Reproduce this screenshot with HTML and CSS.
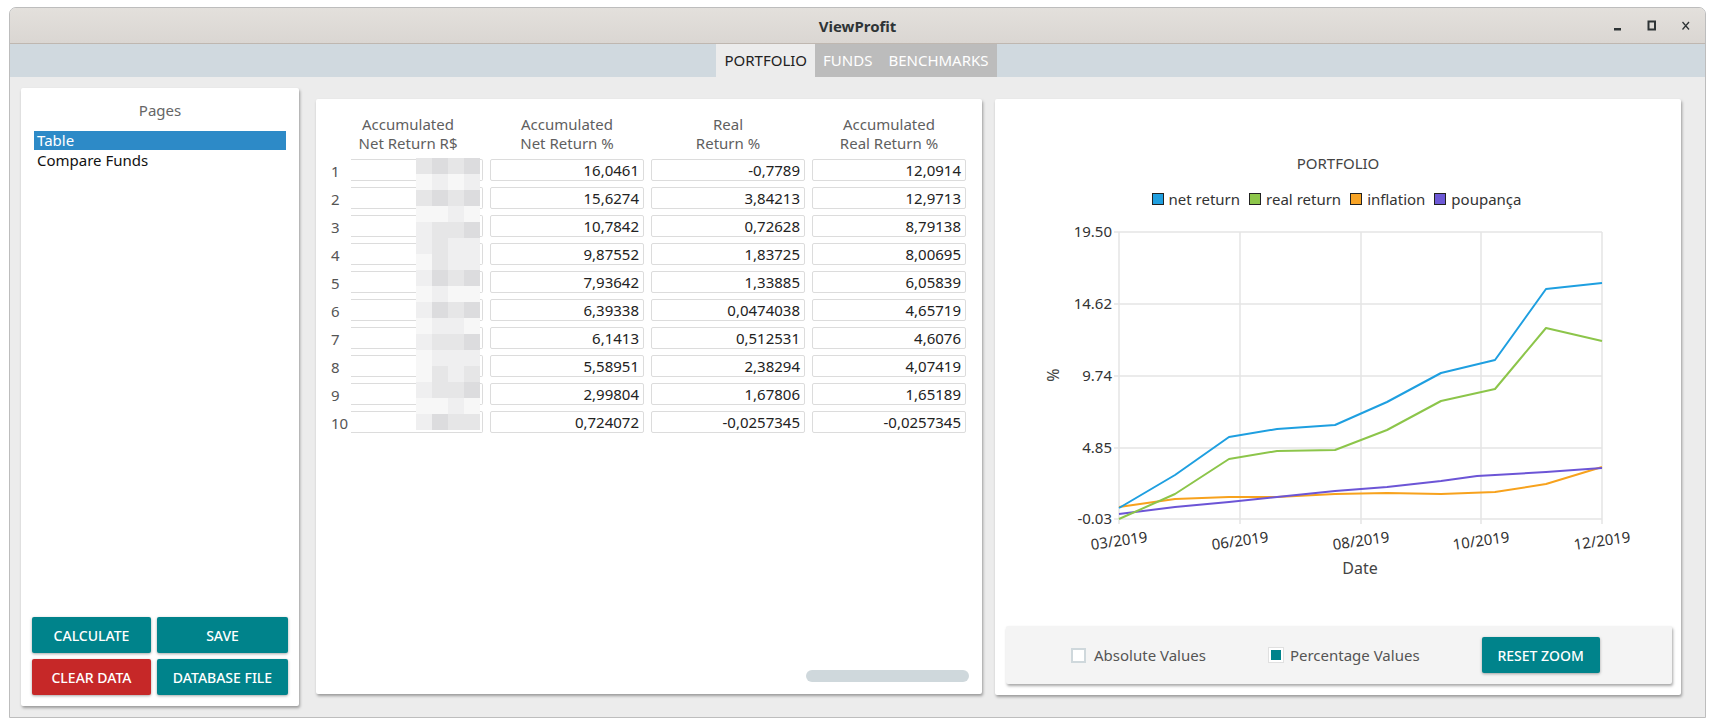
FILE: index.html
```html
<!DOCTYPE html>
<html lang="en">
<head>
<meta charset="utf-8">
<title>ViewProfit</title>
<link rel="stylesheet" href="styles.css">
</head>
<body>
<div class="window">
  <header class="titlebar">
    <div></div>
    <div class="title">ViewProfit</div>
    <div class="controls">
      <svg class="ctl" width="16" height="16" viewBox="0 0 16 16"><rect x="4" y="10" width="7" height="2.5" fill="#2e3436"/></svg>
      <svg class="ctl" width="16" height="16" viewBox="0 0 16 16"><rect x="4.5" y="3.5" width="6.5" height="8" fill="none" stroke="#2e3436" stroke-width="2"/></svg>
      <svg class="ctl" width="16" height="16" viewBox="0 0 16 16"><path d="M4.5 4 L11 11.5 M11 4 L4.5 11.5" stroke="#2e3436" stroke-width="1.3" fill="none"/></svg>
    </div>
  </header>
  <nav class="tabbar">
    <div class="tab active">PORTFOLIO</div>
    <div class="tab">FUNDS</div>
    <div class="tab">BENCHMARKS</div>
  </nav>
  <main class="content">
    <section class="panel side">
      <div class="side-title">Pages</div>
      <ul class="pagelist">
        <li class="sel">Table</li>
        <li>Compare Funds</li>
      </ul>
      <div class="spacer"></div>
      <div class="btns">
        <button class="btn teal">CALCULATE</button>
        <button class="btn teal">SAVE</button>
        <button class="btn red">CLEAR DATA</button>
        <button class="btn teal">DATABASE FILE</button>
      </div>
    </section>

    <section class="panel tablepanel">
      <div class="grid">
        <div class="hd"></div>
        <div class="hd hd1">Accumulated<br>Net Return R$</div>
        <div class="hd">Accumulated<br>Net Return %</div>
        <div class="hd">Real<br>Return %</div>
        <div class="hd">Accumulated<br>Real Return %</div>

        <div class="rn">1</div><div class="c c1"></div><div class="c">16,0461</div><div class="c">-0,7789</div><div class="c">12,0914</div>
        <div class="rn">2</div><div class="c c1"></div><div class="c">15,6274</div><div class="c">3,84213</div><div class="c">12,9713</div>
        <div class="rn">3</div><div class="c c1"></div><div class="c">10,7842</div><div class="c">0,72628</div><div class="c">8,79138</div>
        <div class="rn">4</div><div class="c c1"></div><div class="c">9,87552</div><div class="c">1,83725</div><div class="c">8,00695</div>
        <div class="rn">5</div><div class="c c1"></div><div class="c">7,93642</div><div class="c">1,33885</div><div class="c">6,05839</div>
        <div class="rn">6</div><div class="c c1"></div><div class="c">6,39338</div><div class="c">0,0474038</div><div class="c">4,65719</div>
        <div class="rn">7</div><div class="c c1"></div><div class="c">6,1413</div><div class="c">0,512531</div><div class="c">4,6076</div>
        <div class="rn">8</div><div class="c c1"></div><div class="c">5,58951</div><div class="c">2,38294</div><div class="c">4,07419</div>
        <div class="rn">9</div><div class="c c1"></div><div class="c">2,99804</div><div class="c">1,67806</div><div class="c">1,65189</div>
        <div class="rn">10</div><div class="c c1"></div><div class="c">0,724072</div><div class="c">-0,0257345</div><div class="c">-0,0257345</div>
      </div>
      <div class="mosaic">
        <i class="c3"></i><i class="d"></i><i class="c3"></i><i class="d"></i>
        <i class="a"></i><i class="b"></i><i class="a"></i><i class="b"></i>
        <i class="c3"></i><i class="d"></i><i class="c3"></i><i class="d"></i>
        <i class="a"></i><i class="a"></i><i class="b"></i><i class="a"></i>
        <i class="b"></i><i class="c3"></i><i class="c3"></i><i class="d"></i>
        <i class="b"></i><i class="c3"></i><i class="b"></i><i class="b"></i>
        <i class="a"></i><i class="c3"></i><i class="b"></i><i class="b"></i>
        <i class="b"></i><i class="d"></i><i class="c3"></i><i class="d"></i>
        <i class="a"></i><i class="b"></i><i class="a"></i><i class="a"></i>
        <i class="b"></i><i class="d"></i><i class="c3"></i><i class="d"></i>
        <i class="a"></i><i class="b"></i><i class="b"></i><i class="a"></i>
        <i class="b"></i><i class="c3"></i><i class="c3"></i><i class="d"></i>
        <i class="a"></i><i class="b"></i><i class="b"></i><i class="b"></i>
        <i class="a"></i><i class="c3"></i><i class="b"></i><i class="c3"></i>
        <i class="b"></i><i class="c3"></i><i class="c3"></i><i class="d"></i>
        <i class="a"></i><i class="a"></i><i class="b"></i><i class="a"></i>
        <i class="b"></i><i class="d"></i><i class="c3"></i><i class="c3"></i>
      </div>
      <div class="spacer"></div>
      <div class="scrollrow"><div class="scrollbar"></div></div>
    </section>

    <section class="panel chartpanel">
      <div class="chart-title">PORTFOLIO</div>
      <div class="legend">
        <span class="lg"><i class="sw blue"></i>net return</span>
        <span class="lg"><i class="sw green"></i>real return</span>
        <span class="lg"><i class="sw orange"></i>inflation</span>
        <span class="lg"><i class="sw purple"></i>poupança</span>
      </div>
      <svg class="plot" width="686" height="417" viewBox="0 0 686 417">
        <g class="gridl">
          <line x1="119" y1="23" x2="607" y2="23"/>
          <line x1="119" y1="95" x2="607" y2="95"/>
          <line x1="119" y1="167" x2="607" y2="167"/>
          <line x1="119" y1="239" x2="607" y2="239"/>
          <line x1="119" y1="310" x2="607" y2="310"/>
          <line x1="124" y1="23" x2="124" y2="315"/>
          <line x1="245" y1="23" x2="245" y2="315"/>
          <line x1="366" y1="23" x2="366" y2="315"/>
          <line x1="486" y1="23" x2="486" y2="315"/>
          <line x1="607" y1="23" x2="607" y2="315"/>
        </g>
        <g class="ylab">
          <text x="117" y="28">19.50</text>
          <text x="117" y="100">14.62</text>
          <text x="117" y="172">9.74</text>
          <text x="117" y="244">4.85</text>
          <text x="117" y="315">-0.03</text>
        </g>
        <text class="axtitle" x="64" y="166" transform="rotate(-90 64 166)">%</text>
        <g class="xlab">
          <text x="124" y="337" transform="rotate(-8 124 332)">03/2019</text>
          <text x="245" y="337" transform="rotate(-8 245 332)">06/2019</text>
          <text x="366" y="337" transform="rotate(-8 366 332)">08/2019</text>
          <text x="486" y="337" transform="rotate(-8 486 332)">10/2019</text>
          <text x="607" y="337" transform="rotate(-8 607 332)">12/2019</text>
        </g>
        <text class="axtitle" x="365" y="365">Date</text>
        <g class="series">
          <polyline class="s-orange" points="124,298 180,290 234,288 282,288 340,285 392,284 446,285 500,283 551,275 607,258"/>
          <polyline class="s-purple" points="124,305 180,298 234,293 282,288 340,282 392,278 446,272 482,267 500,266 551,263 607,259"/>
          <polyline class="s-green" points="124,310 180,285 234,250 282,242 340,241 392,221 446,192 500,180 551,119 607,132"/>
          <polyline class="s-blue" points="124,299 180,266 234,228 282,220 340,216 392,193 446,164 500,151 551,80 607,74"/>
        </g>
      </svg>
      <div class="chartbar">
        <span class="chk"></span><span class="lbl">Absolute Values</span>
        <span class="chk on"></span><span class="lbl">Percentage Values</span>
        <button class="btn teal reset">RESET ZOOM</button>
      </div>
    </section>
  </main>
</div>
</body>
</html>
```

FILE: styles.css
```css
* { box-sizing: border-box; }
html, body { margin: 0; padding: 0; }
body {
  background: #ffffff;
  padding: 7px 0 0 9px;
  font-family: "Noto Sans", "Open Sans", sans-serif;
  width: 1714px;
  height: 727px;
  overflow: hidden;
}
.window {
  width: 1697px;
  height: 711px;
  border: 1px solid #bdbdbd;
  border-radius: 7px 7px 0 0;
  display: flex;
  flex-direction: column;
  background: #ececec;
  overflow: hidden;
}
.titlebar {
  height: 36px;
  flex: none;
  background: linear-gradient(#e3e0dc, #dad6d2);
  border-bottom: 1px solid #bfb7b0;
  display: grid;
  grid-template-columns: 1fr auto 1fr;
  align-items: center;
  padding-right: 11px;
}
.title {
  font-weight: 700;
  font-size: 15px;
  color: #2e3436;
  padding-left: 11px;
}
.controls {
  justify-self: end;
  display: flex;
  gap: 18px;
  align-items: center;
}
.ctl { display: block; }
.tabbar {
  height: 33px;
  flex: none;
  background: #d0d9df;
  display: flex;
  justify-content: center;
  padding-right: 2px;
}
.tab {
  font-size: 15px;
  line-height: 33px;
  color: #ffffff;
  background: #bcbcbc;
  padding: 0 8px;
}
.tab.active {
  background: #ececec;
  color: #222;
  padding: 0 8px;
}
.content {
  flex: 1;
  display: flex;
  align-items: flex-start;
  padding: 11px 0 0 11px;
}
.panel {
  background: #ffffff;
  border-radius: 2px;
  box-shadow: 1px 2px 3px rgba(0,0,0,0.35);
  display: flex;
  flex-direction: column;
  flex: none;
}
.side {
  width: 278px;
  height: 618px;
  padding: 12px 11px 11px 11px;
}
.side-title {
  text-align: center;
  font-size: 15px;
  line-height: 20px;
  color: #666;
}
.pagelist {
  list-style: none;
  margin: 11px 2px 0 2px;
  padding: 0;
  font-size: 15px;
  color: #111;
}
.pagelist li {
  line-height: 19px;
  height: 19px;
  padding-left: 3px;
}
.pagelist li + li { margin-top: 1px; }
.pagelist li.sel { background: #2d8ac7; color: #fff; }
.spacer { flex: 1; }
.btns {
  display: grid;
  grid-template-columns: 119px 131px;
  grid-auto-rows: 36px;
  gap: 6px;
}
.btn {
  border: none;
  border-radius: 2px;
  color: #fff;
  font-family: "Noto Sans", "Open Sans", sans-serif;
  font-size: 14px;
  font-weight: 500;
  box-shadow: 0 1px 3px rgba(0,0,0,0.35);
  padding: 0;
}
.teal { background: #00838b; }
.red { background: #c62828; }

.tablepanel {
  width: 666px;
  height: 595px;
  margin: 11px 0 0 17px;
  position: relative;
  padding: 16px 0 0 15px;
}
.grid {
  display: grid;
  grid-template-columns: 13px 132px 154px 154px 154px;
  column-gap: 7px;
  grid-auto-rows: 22px;
  row-gap: 6px;
  grid-template-rows: 38px;
}
.hd {
  font-size: 15px;
  line-height: 19px;
  color: #5f5f5f;
  text-align: center;
  height: 38px;
}
.hd1 { padding-right: 18px; }
.rn {
  font-size: 15px;
  color: #555;
  line-height: 22px;
  padding-top: 1px;
  white-space: nowrap;
}
.c {
  border: 1px solid #dcdcdc;
  border-radius: 2px;
  font-size: 15px;
  line-height: 20px;
  color: #222;
  text-align: right;
  padding-right: 4px;
}
.c.c1 {
  border-left: none;
  border-radius: 0 2px 2px 0;
}
.mosaic {
  position: absolute;
  left: 100px;
  top: 59px;
  display: grid;
  grid-template-columns: repeat(4, 16px);
  grid-auto-rows: 16px;
}
.mosaic i { display: block; }
.mosaic .a { background: #f7f7f7; }
.mosaic .b { background: #efeff0; }
.mosaic .c3 { background: #e6e6e7; }
.mosaic .d { background: #dcdcde; }
.scrollrow {
  display: flex;
  justify-content: flex-end;
  padding: 0 13px 12px 0;
}
.scrollbar {
  width: 163px;
  height: 12px;
  border-radius: 6px;
  background: #cfd8dc;
}

.chartpanel {
  width: 686px;
  height: 596px;
  margin: 11px 0 0 13px;
  padding: 54px 0 11px 0;
}
.chart-title {
  text-align: center;
  font-size: 15px;
  line-height: 20px;
  color: #444;
}
.legend {
  margin-top: 16px;
  height: 20px;
  display: flex;
  justify-content: center;
  gap: 9px;
  font-size: 15px;
  line-height: 20px;
  color: #333;
  padding-right: 3px;
}
.lg { display: flex; align-items: center; gap: 5px; }
.sw {
  display: block;
  width: 12px;
  height: 12px;
  border: 1px solid #222;
}
.sw.blue { background: #209fdf; }
.sw.green { background: #8dc64a; }
.sw.orange { background: #f7a325; }
.sw.purple { background: #6d59d6; }
.plot { display: block; flex: none; }
.gridl line { stroke: #e4e4e4; stroke-width: 1.5; }
.ylab text {
  font-family: "Noto Sans", "Open Sans", sans-serif;
  font-size: 15px;
  fill: #333;
  text-anchor: end;
}
.xlab text {
  font-family: "Noto Sans", "Open Sans", sans-serif;
  font-size: 15px;
  fill: #333;
  text-anchor: middle;
}
.axtitle {
  font-family: "Noto Sans", "Open Sans", sans-serif;
  font-size: 16px;
  fill: #444;
  text-anchor: middle;
}
.series polyline { fill: none; stroke-width: 2; stroke-linejoin: round; }
.s-blue { stroke: #1e9fe0; }
.s-green { stroke: #8cc54a; }
.s-orange { stroke: #f7a21d; }
.s-purple { stroke: #6c55d6; }
.chartbar {
  margin: 0 9px 0 11px;
  height: 58px;
  background: #f4f4f4;
  border-radius: 2px;
  box-shadow: 1px 2px 3px rgba(0,0,0,0.35);
  display: flex;
  align-items: center;
  padding-left: 65px;
  font-size: 15px;
  color: #555;
}
.chk {
  width: 15px;
  height: 15px;
  border: 2px solid #cfd8dc;
  background: #fff;
  flex: none;
}
.chk.on {
  width: 14px;
  height: 14px;
  margin-left: 63px;
  border: 2px solid #fff;
  background: #00838b;
  box-shadow: 0 0 0 1px #e0e0e0;
}
.lbl { margin-left: 8px; }
.chk.on + .lbl { margin-left: 7px; }
.reset {
  width: 118px;
  height: 36px;
  margin-left: 62px;
  font-size: 14px;
}
```
